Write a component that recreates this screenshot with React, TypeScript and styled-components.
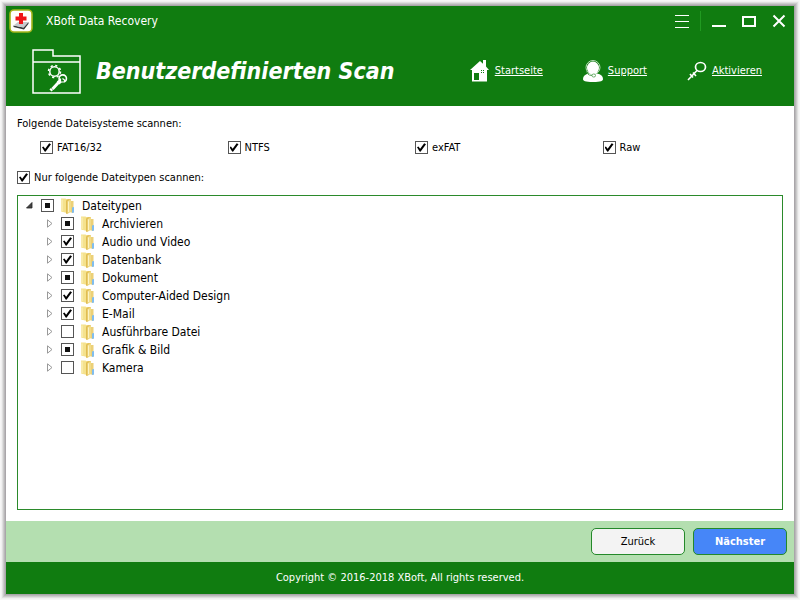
import React, { useEffect, useRef, useState } from "react";
import styled, { createGlobalStyle, css } from "styled-components";

const green = "#107c10";
const uiFont = '"DejaVu Sans Condensed", "DejaVu Sans", sans-serif';

const GlobalStyle = createGlobalStyle`
  *, *::before, *::after { box-sizing: border-box; }
  body {
    margin: 0;
    background: #f6f6f6;
    font-family: ${uiFont};
    font-size: 11px;
    line-height: 16px;
    color: #000;
  }
`;

const Desktop = styled.div`
  display: flex;
  min-height: 100vh;
  padding: 6px;
`;

const Window = styled.div`
  flex: 1;
  display: flex;
  flex-direction: column;
  background: #fff;
  box-shadow: 0 0 0 1px #a9a6a9, 0 0 0 2px #b9b7b9, 0 0 0 3px #cbcbcb, 0 0 0 4px #dfdfdf, 0 0 0 5px #f0f0f0;
`;

const Header = styled.header`
  background: ${green};
  color: #fff;
`;

const TitleBar = styled.div`
  display: flex;
  align-items: center;
  height: 30px;
  padding: 0 8px 0 3px;
`;

const AppName = styled.span`
  flex: 1;
  margin-left: 13px;
  font-size: 12px;
`;

const WindowButtons = styled.div`
  display: flex;
  align-items: center;
`;

const WindowButton = styled.button`
  display: grid;
  place-items: center;
  width: 30px;
  height: 24px;
  padding: 0;
  border: 0;
  background: none;
  color: #fff;
`;

const CloseButton = styled(WindowButton)`
  justify-items: end;
  width: 22px;
`;

const Divider = styled.span`
  width: 1px;
  height: 20px;
  margin-left: 3px;
  margin-right: 3px;
  background: #219a21;
`;

const Banner = styled.div`
  display: flex;
  align-items: center;
  height: 70px;
  padding: 0 32px 0 26px;
`;

const PageTitle = styled.h1`
  flex: 1;
  margin: 0 0 0 15px;
  font-size: 23px;
  line-height: 32px;
  font-weight: 700;
  font-style: italic;
  white-space: nowrap;
`;

const Nav = styled.nav`
  display: flex;
  gap: 40px;
`;

const NavLink = styled.a`
  display: flex;
  align-items: center;
  gap: 5px;
  color: #fff;
  text-decoration: underline;
`;

const Main = styled.main`
  flex: 1;
  display: flex;
  flex-direction: column;
  padding: 10px 11px 11px;
`;

const FileSystems = styled.fieldset`
  margin: 0;
  padding: 0;
  border: 0;
`;

const Legend = styled.legend`
  padding: 0;
`;

const FileSystemGrid = styled.div`
  display: grid;
  grid-template-columns: repeat(4, 1fr);
  padding-left: 23px;
  margin: 7px -7px 0 0;
`;

const CheckLabel = styled.label`
  display: flex;
  align-items: center;
  gap: 4px;
  height: 18px;
`;

const TypesToggle = styled.div`
  display: flex;
  margin: 12px 0 8px;
`;

const Box = styled.input`
  appearance: none;
  display: grid;
  place-items: center;
  flex: none;
  width: 13px;
  height: 13px;
  margin: 0 0 1px;
  border: 1px solid #555;
  background: #fff;

  &:checked::before {
    content: "";
    width: 9px;
    height: 9px;
    background: #000;
    clip-path: polygon(0 48%, 16% 40%, 35% 63%, 80% 4%, 100% 14%, 39% 98%, 29% 94%);
  }

  &:indeterminate::before {
    content: "";
    width: 5px;
    height: 5px;
    background: #111;
    clip-path: none;
  }
`;

const TreePanel = styled.div`
  flex: 1;
  padding: 1px 7px;
  border: 1px solid #2b8a2b;
  background: #fff;
`;

const treeList = css`
  margin: 0;
  padding: 0;
  list-style: none;
`;

const Tree = styled.ul`
  ${treeList}
  font-size: 12px;
`;

const Branch = styled.ul`
  ${treeList}
  padding-left: 20px;
`;

const TreeRow = styled.div`
  display: flex;
  align-items: center;
  height: 18px;
`;

const Expander = styled.button`
  display: grid;
  flex: none;
  width: 9px;
  height: 12px;
  place-items: center;
  margin: 0 7px 2px 0;
  padding: 0;
  border: 0;
  background: none;
`;

const TreeLabel = styled.label`
  display: flex;
  align-items: center;
  gap: 6px;
`;

const ActionBar = styled.div`
  display: flex;
  justify-content: flex-end;
  align-items: center;
  gap: 8px;
  height: 41px;
  padding: 0 7px;
  background: #b4dfb0;
`;

const ActionButton = styled.button<{ $primary?: boolean }>`
  width: 94px;
  height: 27px;
  padding: 0;
  border: 1px solid #24892a;
  border-radius: 5px;
  background: ${(p) => (p.$primary ? "#4686f8" : "#f3f3f3")};
  color: ${(p) => (p.$primary ? "#fff" : "#000")};
  font-family: inherit;
  font-size: 11px;
  font-weight: ${(p) => (p.$primary ? 700 : 400)};
`;

const Footer = styled.footer`
  display: flex;
  align-items: center;
  justify-content: center;
  height: 32px;
  background: ${green};
  color: #fff;
`;

const LogoIcon = () => (
  <svg width="24" height="24" viewBox="0 0 24 24" aria-hidden="true">
    <rect x="1" y="1" width="22" height="22" rx="4" fill="#fffefa" stroke="#a4b51b" strokeWidth="1.6" />
    <path d="M4.500 16.500 14.500 18.500l5-5.500v1.800L15 20.500 4.500 18z" fill="#343637" />
    <path d="M4.500 16.500 9 13l10.500 0-5 5.500z" fill="#c7c9cc" />
    <path d="M10 4h4v3.500h3.500v4H14V15h-4v-3.500H6.500v-4H10z" fill="#f01416" />
  </svg>
);

const FolderGearIcon = () => (
  <svg width="49" height="46" viewBox="0 0 49 46" fill="none" stroke="#fff" aria-hidden="true">
    <path d="M1 45V2h20v6h27v37zM1 14h47" strokeWidth="1.500" />
    <circle cx="22.500" cy="23.500" r="4.700" strokeWidth="1.500" />
    <circle cx="22.500" cy="23.500" r="6" strokeWidth="1.500" strokeDasharray="2.200 2.512" />
    <path d="m18.500 42.500 1.500-1.500M20.500 41l6-6.500" strokeWidth="3" />
    <path d="m26 35 2.500-2" strokeWidth="4" />
    <circle cx="31" cy="30.500" r="4" fill={green} stroke="none" />
    <path d="M28.500 33.500a3.700 3.700 0 1 1 4.500 0" strokeWidth="1.600" />
    <path d="M28.500 30.500v3.500h4v-2l-2-1.500" strokeWidth="1.200" />
  </svg>
);

const HomeIcon = () => (
  <svg width="20" height="22" viewBox="0 0 20 22" aria-hidden="true">
    <path fill="#fff" fillRule="evenodd" d="M0 10 10 1l3 2.700V0h3v6.500L19 10h-2v11.500H2V10zM4 13v7h5v-7z" />
    <path fill={green} d="M11 10h1v1h-1zM13 10h1v1h-1zM11 12h1v1h-1zM13 12h1v1h-1z" />
  </svg>
);

const SupportIcon = () => (
  <svg width="20" height="22" viewBox="0 0 20 22" fill="none" aria-hidden="true">
    <path fill="#fff" d="M0 19c0-3 2-4.500 6-5.500h8c4 1 6 2.500 6 5.500 0 2-2 3-10 3S0 21 0 19z" />
    <circle cx="10" cy="7.500" r="7" stroke="#b8dcb8" />
    <ellipse cx="10" cy="8" rx="6" ry="6.500" fill="#fff" />
    <path d="M3.500 10.500c0 3 2 5 5.500 5" stroke="#5aa55a" />
    <rect x="9" y="14" width="3.500" height="3" rx="1.500" fill="#fff" stroke="#4b9d4b" strokeWidth=".8" />
  </svg>
);

const KeyIcon = () => (
  <svg width="20" height="20" viewBox="0 0 20 20" fill="none" stroke="#fff" aria-hidden="true">
    <ellipse cx="13.500" cy="6" rx="5" ry="4.500" strokeWidth="1.700" />
    <path d="M10 9.500 1 19M3 13l3 3.500M6 11.500l3 3.500" strokeWidth="1.600" />
  </svg>
);

const FolderIcon = () => (
  <svg width="16" height="16" viewBox="0 0 16 16" aria-hidden="true">
    <path d="M2 1h9v12.500H2z" fill="#efd37a" />
    <path d="M9 3h4.500v12L9 14z" fill="#ecd077" />
    <path d="M12 9.500 14 9v5.500l-2 .5z" fill="#7fbdf0" />
    <path d="M1 .5h4.500l1.500 1V15l-6-1.500z" fill="#f5e28e" />
    <path d="M6 2.500 9.500 1v13.500L7 16l-1-.5z" fill="#e0bd52" />
    <path d="M7.500 3 11 1.500v12L7.500 15.500z" fill="#f1dc8a" />
    <path d="M2 1.500v11.500M8.500 3.500V14" stroke="#fcf3c4" />
  </svg>
);

const ExpanderIcon = ({ open }: { open: boolean }) => (
  <svg width="9" height="9" viewBox="0 0 9 9" aria-hidden="true">
    {open ? (
      <path d="M7 1.500v5.500H1.500z" fill="#444" stroke="#222" strokeWidth=".8" />
    ) : (
      <path d="M2.500.8v7.400L7 4.500z" fill="#fff" stroke="#999" />
    )}
  </svg>
);

type CheckState = "on" | "off" | "mixed";

function TriBox({ state }: { state: CheckState }) {
  const ref = useRef<HTMLInputElement>(null);
  useEffect(() => {
    if (ref.current) ref.current.indeterminate = state === "mixed";
  }, [state]);
  return <Box ref={ref} type="checkbox" defaultChecked={state === "on"} />;
}

const fileSystems = ["FAT16/32", "NTFS", "exFAT", "Raw"];

const fileTypes: { name: string; state: CheckState }[] = [
  { name: "Archivieren", state: "mixed" },
  { name: "Audio und Video", state: "on" },
  { name: "Datenbank", state: "on" },
  { name: "Dokument", state: "mixed" },
  { name: "Computer-Aided Design", state: "on" },
  { name: "E-Mail", state: "on" },
  { name: "Ausführbare Datei", state: "off" },
  { name: "Grafik & Bild", state: "mixed" },
  { name: "Kamera", state: "off" },
];

type NodeProps = { name: string; state: CheckState; open: boolean; onToggle?: () => void };

const TreeNode = ({ name, state, open, onToggle }: NodeProps) => (
  <TreeRow>
    <Expander type="button" aria-label={name} aria-expanded={open} onClick={onToggle}>
      <ExpanderIcon open={open} />
    </Expander>
    <TreeLabel>
      <TriBox state={state} />
      <FolderIcon />
      <span>{name}</span>
    </TreeLabel>
  </TreeRow>
);

export default function App() {
  const [open, setOpen] = useState(true);
  return (
    <>
      <GlobalStyle />
      <Desktop>
        <Window>
          <Header>
            <TitleBar>
              <LogoIcon />
              <AppName>XBoft Data Recovery</AppName>
              <WindowButtons>
                <WindowButton type="button" aria-label="Menü">
                  <svg width="14" height="15" viewBox="0 0 14 15" stroke="#fff" aria-hidden="true">
                    <path d="M0 1.500h14M0 7.500h14M0 13.500h14" />
                  </svg>
                </WindowButton>
                <Divider />
                <WindowButton type="button" aria-label="Minimieren">
                  <svg width="14" height="14" viewBox="0 0 14 14" stroke="#fff" strokeWidth="2" aria-hidden="true">
                    <path d="M0 12h14" />
                  </svg>
                </WindowButton>
                <WindowButton type="button" aria-label="Maximieren">
                  <svg width="14" height="12" viewBox="0 0 14 12" fill="none" stroke="#fff" strokeWidth="2" aria-hidden="true">
                    <path d="M1 2h12v9H1z" />
                  </svg>
                </WindowButton>
                <CloseButton type="button" aria-label="Schließen">
                  <svg width="14" height="14" viewBox="0 0 14 14" stroke="#fff" strokeWidth="2" aria-hidden="true">
                    <path d="m1.500 1.500 11 11M12.500 1.500l-11 11" />
                  </svg>
                </CloseButton>
              </WindowButtons>
            </TitleBar>
            <Banner>
              <FolderGearIcon />
              <PageTitle>Benutzerdefinierten Scan</PageTitle>
              <Nav>
                <NavLink href="#start"><HomeIcon />Startseite</NavLink>
                <NavLink href="#support"><SupportIcon />Support</NavLink>
                <NavLink href="#activate"><KeyIcon />Aktivieren</NavLink>
              </Nav>
            </Banner>
          </Header>
          <Main>
            <FileSystems>
              <Legend>Folgende Dateisysteme scannen:</Legend>
              <FileSystemGrid>
                {fileSystems.map((name) => (
                  <CheckLabel key={name}>
                    <Box type="checkbox" defaultChecked />
                    {name}
                  </CheckLabel>
                ))}
              </FileSystemGrid>
            </FileSystems>
            <TypesToggle>
              <CheckLabel>
                <Box type="checkbox" defaultChecked />
                Nur folgende Dateitypen scannen:
              </CheckLabel>
            </TypesToggle>
            <TreePanel>
              <Tree>
                <li>
                  <TreeNode name="Dateitypen" state="mixed" open={open} onToggle={() => setOpen(!open)} />
                  {open && (
                    <Branch>
                      {fileTypes.map((t) => (
                        <li key={t.name}>
                          <TreeNode name={t.name} state={t.state} open={false} />
                        </li>
                      ))}
                    </Branch>
                  )}
                </li>
              </Tree>
            </TreePanel>
          </Main>
          <ActionBar>
            <ActionButton type="button">Zurück</ActionButton>
            <ActionButton type="button" $primary>Nächster</ActionButton>
          </ActionBar>
          <Footer>Copyright © 2016-2018 XBoft, All rights reserved.</Footer>
        </Window>
      </Desktop>
    </>
  );
}
